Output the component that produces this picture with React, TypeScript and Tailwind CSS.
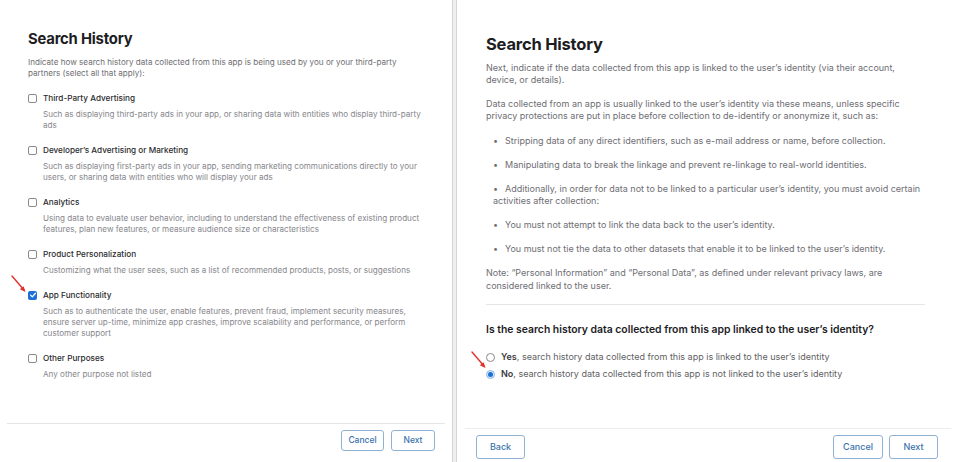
import React from "react";

const font = { fontFamily: "Inter, 'Liberation Sans', sans-serif" };

function Checkbox({ checked }: { checked?: boolean }) {
  if (checked) {
    return (
      <span className="flex h-[9px] w-[9px] shrink-0 items-center justify-center rounded-[2px] bg-[#1c6fd6]">
        <svg viewBox="0 0 10 10" className="h-[8px] w-[8px]" fill="none">
          <path d="M2 5.2 4.1 7.3 8 2.8" stroke="#fff" strokeWidth="1.6" strokeLinecap="round" strokeLinejoin="round" />
        </svg>
      </span>
    );
  }
  return <span className="h-[9px] w-[9px] shrink-0 rounded-[2px] border border-[#8a8a8a] bg-white" />;
}

function Arrow({ className }: { className: string }) {
  return (
    <svg viewBox="0 0 16 18" className={className} fill="none">
      <path d="M1 1 13 15" stroke="#e0322b" strokeWidth="1.4" strokeLinecap="round" />
      <path d="M14.5 17 8.8 14.2 12.6 11.2Z" fill="#e0322b" />
    </svg>
  );
}

const purposes = [
  {
    label: "Third-Party Advertising",
    desc: "Such as displaying third-party ads in your app, or sharing data with entities who display third-party ads",
  },
  {
    label: "Developer\u2019s Advertising or Marketing",
    desc: "Such as displaying first-party ads in your app, sending marketing communications directly to your users, or sharing data with entities who will display your ads",
  },
  {
    label: "Analytics",
    desc: "Using data to evaluate user behavior, including to understand the effectiveness of existing product features, plan new features, or measure audience size or characteristics",
  },
  {
    label: "Product Personalization",
    desc: "Customizing what the user sees, such as a list of recommended products, posts, or suggestions",
  },
  {
    label: "App Functionality",
    desc: "Such as to authenticate the user, enable features, prevent fraud, implement security measures, ensure server up-time, minimize app crashes, improve scalability and performance, or perform customer support",
    checked: true,
  },
  { label: "Other Purposes", desc: "Any other purpose not listed" },
];

function Btn({ children, className }: { children: React.ReactNode; className: string }) {
  return (
    <button
      className={`flex items-center justify-center rounded-[3px] border border-[#8fb2d4] bg-white font-medium text-[#3a72ad] ${className}`}
    >
      {children}
    </button>
  );
}

function LeftPanel() {
  return (
    <div className="relative flex w-[452px] shrink-0 flex-col bg-white">
      <div className="flex-1 pl-[28px] pr-[30px] pt-[29px]">
        <h1 className="text-[14.8px] font-bold leading-[20px] tracking-[-0.2px] text-[#1d1d1f]">Search History</h1>
        <p className="mt-[8px] text-[8.1px] leading-[11px] text-[#6e6e73]">
          Indicate how search history data collected from this app is being used by you or your third-party
          partners (select all that apply):
        </p>
        <div className="mt-[13px] flex flex-col gap-[13px]">
          {purposes.map((p) => (
            <div key={p.label}>
              <div className="flex h-[12px] items-center gap-[6px]">
                <Checkbox checked={p.checked} />
                <span className="text-[8.2px] font-medium text-[#2b2b2e]">{p.label}</span>
              </div>
              <p className="mt-[5px] pl-[15px] text-[8.1px] leading-[11px] text-[#86868b]">{p.desc}</p>
            </div>
          ))}
        </div>
      </div>
      <Arrow className="absolute left-[11px] top-[275px] h-[18px] w-[16px]" />
      <div className="mx-[7px] h-px bg-[#e6e6e6]" />
      <div className="flex h-[38px] justify-end gap-[7px] pr-[17px] pt-[6px]">
        <Btn className="h-[21px] w-[43px] text-[8.5px]">Cancel</Btn>
        <Btn className="h-[21px] w-[44px] text-[8.5px]">Next</Btn>
      </div>
    </div>
  );
}

const bullets = [
  "Stripping data of any direct identifiers, such as e-mail address or name, before collection.",
  "Manipulating data to break the linkage and prevent re-linkage to real-world identities.",
  "Additionally, in order for data not to be linked to a particular user\u2019s identity, you must avoid certain activities after collection:",
  "You must not attempt to link the data back to the user\u2019s identity.",
  "You must not tie the data to other datasets that enable it to be linked to the user\u2019s identity.",
];

function Radio({ checked }: { checked?: boolean }) {
  if (checked) {
    return (
      <span className="flex h-[9px] w-[9px] shrink-0 items-center justify-center rounded-full border border-[#8fbbe8] bg-[#d8e8f8]">
        <span className="h-[5px] w-[5px] rounded-full bg-[#1c6fd6]" />
      </span>
    );
  }
  return <span className="h-[9px] w-[9px] shrink-0 rounded-full border border-[#8a8a8a] bg-white" />;
}

function RightPanel() {
  return (
    <div className="relative flex flex-1 flex-col bg-white">
      <div className="flex-1 pl-[29px] pr-[33px] pt-[33px]">
        <h1 className="text-[16.5px] font-bold leading-[22px] tracking-[-0.2px] text-[#1d1d1f]">Search History</h1>
        <p className="mt-[7px] text-[9px] leading-[12px] text-[#6e6e73]">
          Next, indicate if the data collected from this app is linked to the user&rsquo;s identity (via their account,
          device, or details).
        </p>
        <p className="mt-[12px] text-[9px] leading-[12px] text-[#6e6e73]">
          Data collected from an app is usually linked to the user&rsquo;s identity via these means, unless specific
          privacy protections are put in place before collection to de-identify or anonymize it, such as:
        </p>
        <div className="mt-[13px] flex flex-col gap-[12px]">
          {bullets.map((b) => (
            <p key={b} className="pl-[7px] text-[9px] leading-[12px] text-[#6e6e73]">
              <span className="inline-block w-[12px]">{"\u2022"}</span>
              {b}
            </p>
          ))}
        </div>
        <p className="mt-[11px] text-[9px] leading-[13px] text-[#6e6e73]">
          Note: &ldquo;Personal Information&rdquo; and &ldquo;Personal Data&rdquo;, as defined under relevant privacy
          laws, are considered linked to the user.
        </p>
        <div className="mt-[12px] h-px bg-[#e6e6e6]" />
        <h2 className="mt-[18px] text-[10.4px] font-semibold leading-[14px] text-[#1d1d1f]">
          Is the search history data collected from this app linked to the user&rsquo;s identity?
        </h2>
        <div className="mt-[14px] flex flex-col gap-[5px]">
          <label className="flex h-[12px] items-center gap-[6px] text-[9px] text-[#5f5f64]">
            <Radio />
            <span>
              <b className="font-semibold text-[#3a3a3c]">Yes</b>, search history data collected from this app is
              linked to the user&rsquo;s identity
            </span>
          </label>
          <label className="flex h-[12px] items-center gap-[6px] text-[9px] text-[#5f5f64]">
            <Radio checked />
            <span>
              <b className="font-semibold text-[#3a3a3c]">No</b>, search history data collected from this app is not
              linked to the user&rsquo;s identity
            </span>
          </label>
        </div>
      </div>
      <Arrow className="absolute left-[14px] top-[350px] h-[20px] w-[16px]" />
      <div className="ml-[8px] mr-[7px] h-px bg-[#ececec]" />
      <div className="flex h-[33px] items-start justify-between pl-[19px] pr-[20px] pt-[6px]">
        <Btn className="h-[24px] w-[49px] text-[9px]">Back</Btn>
        <div className="flex gap-[6px]">
          <Btn className="h-[24px] w-[50px] text-[9px]">Cancel</Btn>
          <Btn className="h-[24px] w-[49px] text-[9px]">Next</Btn>
        </div>
      </div>
    </div>
  );
}

export default function App() {
  return (
    <div className="flex h-[462px] w-[958px] overflow-hidden bg-white" style={font}>
      <LeftPanel />
      <div className="w-[5px] shrink-0 border-x border-[#d4d4d4] bg-[#efefef]" />
      <RightPanel />
    </div>
  );
}
